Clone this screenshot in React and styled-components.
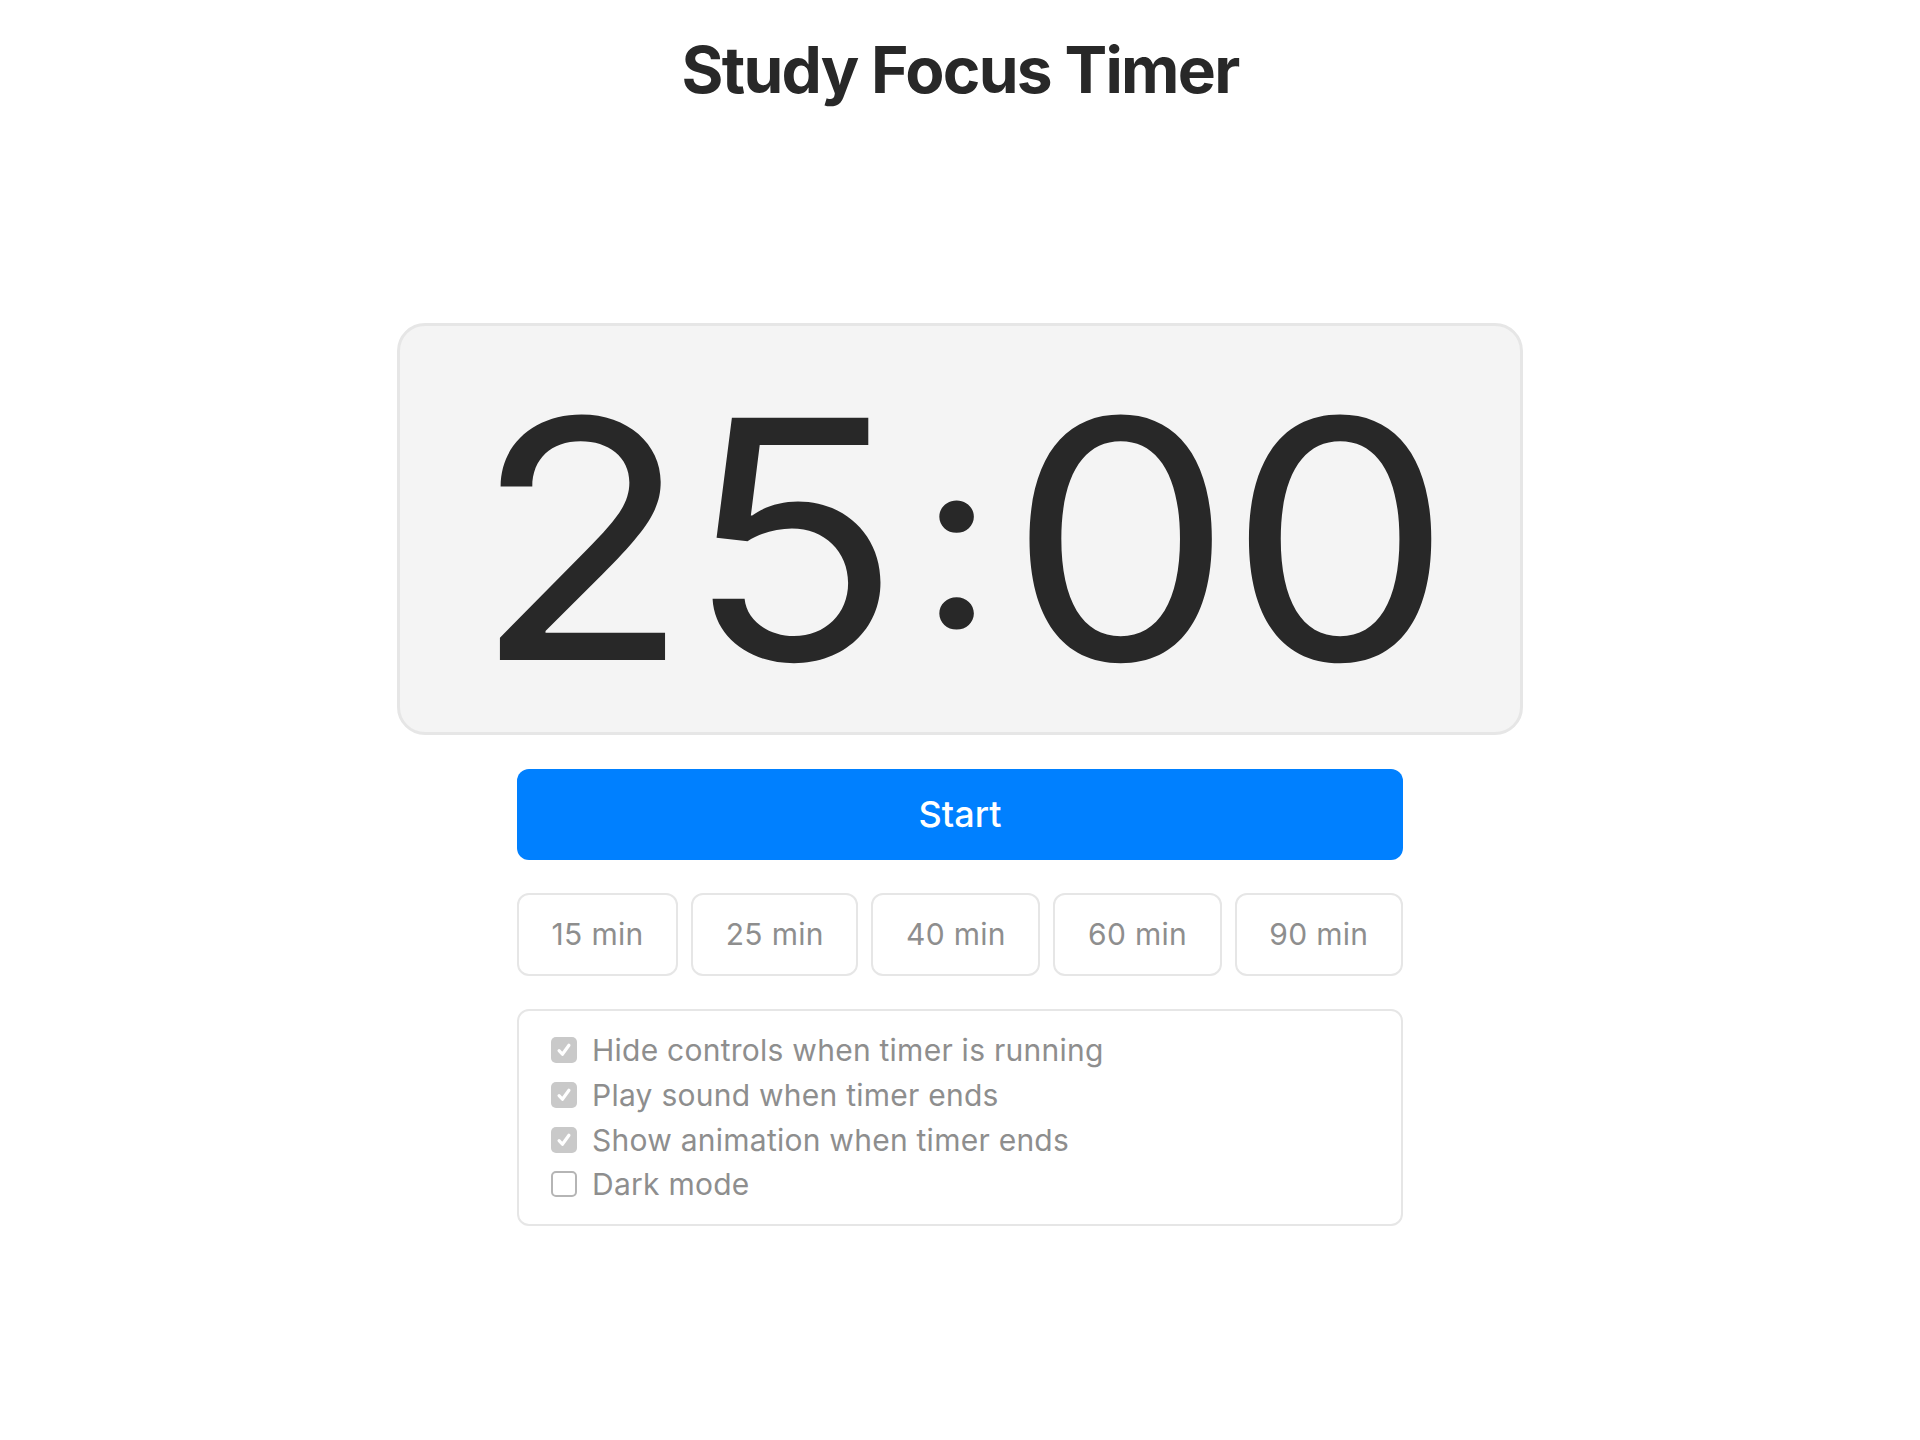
import React from "react";
import styled, { createGlobalStyle } from "styled-components";

const Global = createGlobalStyle`
  html, body { margin: 0; padding: 0; background: #ffffff; }
  body { font-family: Inter, "Noto Sans", "Liberation Sans", sans-serif; color: #282828; }
  * { box-sizing: border-box; }
`;

const Page = styled.div`
  display: flex;
  flex-direction: column;
  align-items: center;
  padding-top: 32px;
`;

const Title = styled.h1`
  margin: 0;
  font-size: 64px;
  line-height: 1.2;
  font-weight: 700;
  letter-spacing: -1.7px;
  color: #282828;
`;

const TimerBox = styled.div`
  margin-top: 214px;
  width: 1126px;
  height: 412px;
  border: 3px solid #e6e6e6;
  border-radius: 28px;
  background: #f4f4f4;
  display: flex;
  align-items: flex-start;
  justify-content: center;
  padding-top: 46px;
`;

const Digits = styled.div`
  font-size: 333px;
  line-height: 1;
  font-weight: 400;
  letter-spacing: -5px;
  color: #282828;
  white-space: nowrap;
  transform: scaleX(1.07);
`;

const Colon = styled.span`
  font-size: 245px;
  line-height: 1;
  font-feature-settings: "calt" 0;
  vertical-align: 32px;
  margin: 0 18px 0 21px;
`;

const Controls = styled.div`
  width: 886px;
  margin-top: 34px;
  display: flex;
  flex-direction: column;
  gap: 33px;
`;

const StartButton = styled.button`
  height: 91px;
  border: none;
  border-radius: 12px;
  background: #0080ff;
  color: #ffffff;
  font-family: inherit;
  font-size: 36px;
  font-weight: 500;
  cursor: pointer;
`;

const Presets = styled.div`
  display: flex;
  gap: 13px;
`;

const PresetButton = styled.button`
  flex: 1 1 auto;
  height: 83px;
  border: 2px solid #e6e6e6;
  border-radius: 12px;
  background: #ffffff;
  color: #8e8e8e;
  font-family: inherit;
  font-size: 30px;
  letter-spacing: 0.3px;
  font-weight: 400;
  padding: 0 10px;
  cursor: pointer;
`;

const Settings = styled.div`
  border: 2px solid #e6e6e6;
  border-radius: 12px;
  padding: 17px 32px;
  display: flex;
  flex-direction: column;
`;

const Row = styled.label`
  display: flex;
  align-items: center;
  gap: 15px;
  height: 44.7px;
  font-size: 30px;
  letter-spacing: 0.25px;
  color: #8e8e8e;
`;

const Box = styled.span`
  width: 26px;
  height: 26px;
  border-radius: 5px;
  flex: none;
  display: flex;
  align-items: center;
  justify-content: center;
  background: ${(p) => (p.$checked ? "#c9c9c9" : "#ffffff")};
  border: ${(p) => (p.$checked ? "none" : "2px solid #b5b5b5")};
`;

const Check = () => (
  <svg width="18" height="18" viewBox="0 0 16 16" fill="none">
    <path d="M3.6 8.6 L6.6 11.8 L12.4 3.8" stroke="#ffffff" strokeWidth="2.8" strokeLinecap="round" strokeLinejoin="round" />
  </svg>
);

const options = [
  { label: "Hide controls when timer is running", checked: true },
  { label: "Play sound when timer ends", checked: true },
  { label: "Show animation when timer ends", checked: true },
  { label: "Dark mode", checked: false },
];

export default function App() {
  return (
    <>
      <Global />
      <Page>
        <Title>Study Focus Timer</Title>
        <TimerBox>
          <Digits>
            25<Colon>:</Colon>00
          </Digits>
        </TimerBox>
        <Controls>
          <StartButton>Start</StartButton>
          <Presets>
            {[15, 25, 40, 60, 90].map((m) => (
              <PresetButton key={m}>{m} min</PresetButton>
            ))}
          </Presets>
          <Settings>
            {options.map((o) => (
              <Row key={o.label}>
                <Box $checked={o.checked}>{o.checked && <Check />}</Box>
                {o.label}
              </Row>
            ))}
          </Settings>
        </Controls>
      </Page>
    </>
  );
}
